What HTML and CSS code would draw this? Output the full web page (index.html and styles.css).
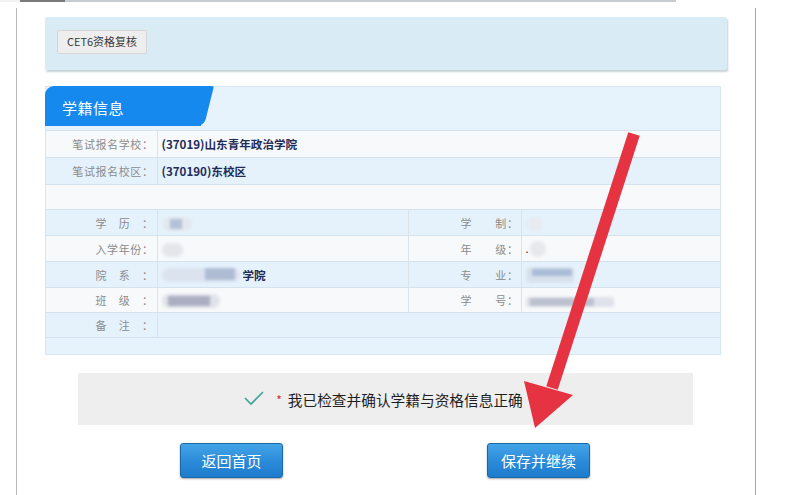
FILE: index.html
```html
<!DOCTYPE html>
<html lang="zh-CN">
<head>
<meta charset="utf-8">
<title>学籍信息</title>
<link rel="stylesheet" href="styles.css">
</head>
<body>
<div class="topbar"></div>
<div class="frame">
  <div class="crumb-panel">
    <span class="crumb-btn">CET6资格复核</span>
  </div>

  <div class="section">
    <div class="tab"><span class="tab-text">学籍信息</span></div>
    <table class="info">
      <colgroup>
        <col class="c1"><col class="c2"><col class="c3"><col class="c4">
      </colgroup>
      <tr class="r-w h27">
        <td class="lab">笔试报名学校：</td>
        <td class="val" colspan="3">(37019)山东青年政治学院</td>
      </tr>
      <tr class="r-b h27">
        <td class="lab">笔试报名校区：</td>
        <td class="val" colspan="3">(370190)东校区</td>
      </tr>
      <tr class="r-w h25">
        <td colspan="4"></td>
      </tr>
      <tr class="r-b h26">
        <td class="lab">学　历　：</td>
        <td class="val"><span class="blob b-xl"><i class="core"></i></span></td>
        <td class="lab lab-r">学　　制：</td>
        <td class="val"><span class="blob b-xz"></span></td>
      </tr>
      <tr class="r-w h26">
        <td class="lab">入学年份：</td>
        <td class="val"><span class="blob b-nf"></span></td>
        <td class="lab lab-r">年　　级：</td>
        <td class="val"><span class="dot">.</span><span class="blob b-nj"></span></td>
      </tr>
      <tr class="r-b h26">
        <td class="lab">院　系　：</td>
        <td class="val"><span class="blob b-yx"><i class="core core-yx"></i></span><span class="suffix">学院</span></td>
        <td class="lab lab-r">专　　业：</td>
        <td class="val"><span class="blob b-zy"><i class="core core-zy"></i></span></td>
      </tr>
      <tr class="r-w h25">
        <td class="lab">班　级　：</td>
        <td class="val"><span class="blob b-bj"><i class="core core-bj"></i></span></td>
        <td class="lab lab-r">学　　号：</td>
        <td class="val"><span class="blob b-xh"><i class="core core-xh"></i></span></td>
      </tr>
      <tr class="r-b h25">
        <td class="lab">备　注　：</td>
        <td class="val" colspan="3"></td>
      </tr>
    </table>
  </div>

  <div class="confirm">
    <svg class="check" width="20" height="16" viewBox="0 0 20 16">
      <polyline points="1,8 7,14 19,2" fill="none" stroke="#3fa39b" stroke-width="1.6"/>
    </svg>
    <span class="star">*</span>
    <span class="confirm-text">我已检查并确认学籍与资格信息正确</span>
  </div>

  <div class="actions">
    <button class="btn btn-home">返回首页</button>
    <button class="btn btn-save">保存并继续</button>
  </div>
</div>

<svg class="arrow" width="800" height="495" viewBox="0 0 800 495">
  <line x1="634" y1="134" x2="552" y2="388" stroke="#e63341" stroke-width="12"/>
  <polygon points="524,381 573,395 535,428" fill="#e63341"/>
</svg>
</body>
</html>
```

FILE: styles.css
```css
* { box-sizing: border-box; }

html, body {
  margin: 0;
  padding: 0;
  background: #ffffff;
  width: 800px;
  height: 495px;
  overflow: hidden;
  font-family: "Noto Sans CJK SC", "Noto Sans", sans-serif;
}

.topbar {
  width: 676px;
  height: 2px;
  background: linear-gradient(to right, #f2f2f2 0, #f2f2f2 20px, #7a7a7a 20px, #7a7a7a 65px, #c6cdd1 65px, #c6cdd1 100%);
}

.frame {
  margin-top: 6px;
  margin-left: 16px;
  width: 740px;
  height: 487px;
  border-left: 1px solid #b9b9b9;
  border-right: 1.5px solid #aaaaaa;
  padding: 9px 0 0 28px;
}

.crumb-panel {
  width: 682px;
  height: 53px;
  background: #d9ebf5;
  border-radius: 2px;
  box-shadow: 1px 2px 2px rgba(90, 120, 140, 0.35);
  display: flex;
  align-items: center;
  padding-left: 12px;
}

.crumb-btn {
  display: inline-flex;
  align-items: center;
  justify-content: center;
  width: 90px;
  height: 24px;
  background: #eeeeee;
  border: 1px solid #d6d6d6;
  border-radius: 2px;
  font-size: 11px;
  color: #3a3a3a;
  line-height: 1;
  margin-top: -4px;
}

.section {
  margin-top: 16px;
  width: 676px;
  height: 269px;
  background: #e6f3fc;
  border: 1px solid #d7e7f1;
  padding-bottom: 18px;
}

.tab {
  position: relative;
  width: 156px;
  height: 40px;
  margin-top: -1px;
  margin-left: -1px;
  background: #1689ee;
  border-radius: 9px 0 0 0;
  display: flex;
  align-items: center;
  padding-left: 17px;
  margin-bottom: 4px;
}

.tab::after {
  content: "";
  position: absolute;
  top: 0;
  right: -8px;
  width: 16px;
  height: 40px;
  background: #1689ee;
  border-radius: 0 2px 7px 0;
  transform: skewX(-14deg);
}

.tab-text {
  position: relative;
  z-index: 1;
  color: #ffffff;
  font-size: 15px;
  line-height: 1;
  letter-spacing: 0.5px;
  margin-top: 2px;
}

.info {
  width: 674px;
  border-collapse: collapse;
  table-layout: fixed;
}

.info col.c1 { width: 111px; }
.info col.c2 { width: 251px; }
.info col.c3 { width: 113px; }
.info col.c4 { width: 199px; }

.info td {
  border-top: 1px solid #d3e2ec;
  border-bottom: 1px solid #d3e2ec;
  padding: 0;
  vertical-align: middle;
}

.info tr.h27 td { height: 27px; }
.info tr.h26 td { height: 26px; }
.info tr.h25 td { height: 25px; }

.r-w td { background: #f8f9fa; }
.r-b td { background: #e5f2fc; }

.lab {
  text-align: right;
  font-size: 11px;
  color: #8c8c8c;
  letter-spacing: 0.6px;
  padding-right: 3px !important;
  border-right: 1px solid #dbe3e9;
  white-space: nowrap;
}

.lab-r {
  border-left: 1px solid #dbe3e9;
  padding-right: 2px !important;
}

.val {
  padding-left: 4px !important;
  font-size: 11.6px;
  font-weight: bold;
  color: #222c58;
  white-space: nowrap;
}

.blob {
  position: relative;
  display: inline-block;
  vertical-align: middle;
  height: 14px;
  border-radius: 7px;
  background: #e3e8ee;
  filter: blur(1.4px);
}

.core {
  position: absolute;
  top: 2px;
  height: 10px;
  background: #b3c0d6;
}

.b-xl { width: 30px; }
.b-xl .core { left: 8px; width: 12px; }

.b-nf { width: 21px; background: #e4e6ea; border-radius: 8px; }

.b-yx { width: 78px; background: #dbe3ee; }
.core-yx { left: 43px; width: 30px; height: 12px; top: 0; background: #aebcd3; }

.b-bj { width: 58px; background: #e1e3ea; }
.core-bj { left: 6px; width: 42px; background: #aaaec0; }

.b-xz { width: 18px; background: #e7ebf0; }

.dot { font-size: 11px; color: #333; font-weight: normal; margin-right: 1px; }
.b-nj { width: 16px; height: 16px; border-radius: 8px; background: #e6e8eb; }

.b-zy { width: 48px; height: 16px; background: #d7e1ec; border-radius: 4px; }
.core-zy { left: 6px; width: 40px; top: 2px; height: 7px; background: #a9bbd6; }

.b-xh { width: 88px; height: 10px; background: #dfe2ea; border-radius: 3px; }
.core-xh { left: 4px; width: 64px; top: 1px; height: 8px; background: #bcc1cf; }

.suffix {
  margin-left: 3px;
  vertical-align: middle;
}

.confirm {
  margin-top: 18px;
  margin-left: 33px;
  width: 615px;
  height: 52px;
  background: #eeeeee;
  display: flex;
  align-items: center;
  justify-content: center;
  padding-top: 2px;
  padding-right: 4px;
}

.check {
  display: block;
  margin-right: 12px;
  margin-top: -4px;
}

.star {
  color: #e0262d;
  font-size: 12px;
  margin-right: 6px;
  line-height: 1;
}

.confirm-text {
  font-size: 14.7px;
  color: #1e1e1e;
  line-height: 1;
}

.actions {
  margin-top: 18px;
  display: flex;
  padding-left: 135px;
  gap: 204px;
}

.btn {
  width: 103px;
  height: 35px;
  border: 1px solid #1a68a8;
  border-radius: 3px;
  background: linear-gradient(to bottom, #44a4e8 0%, #2a8ad8 55%, #1d7bcb 100%);
  box-shadow: 0 1px 2px rgba(0, 0, 0, 0.35);
  color: #ffffff;
  font-family: "Noto Sans CJK SC", sans-serif;
  font-size: 15px;
  line-height: 1;
  padding: 0;
}

.arrow {
  position: absolute;
  left: 0;
  top: 0;
  pointer-events: none;
}
```
